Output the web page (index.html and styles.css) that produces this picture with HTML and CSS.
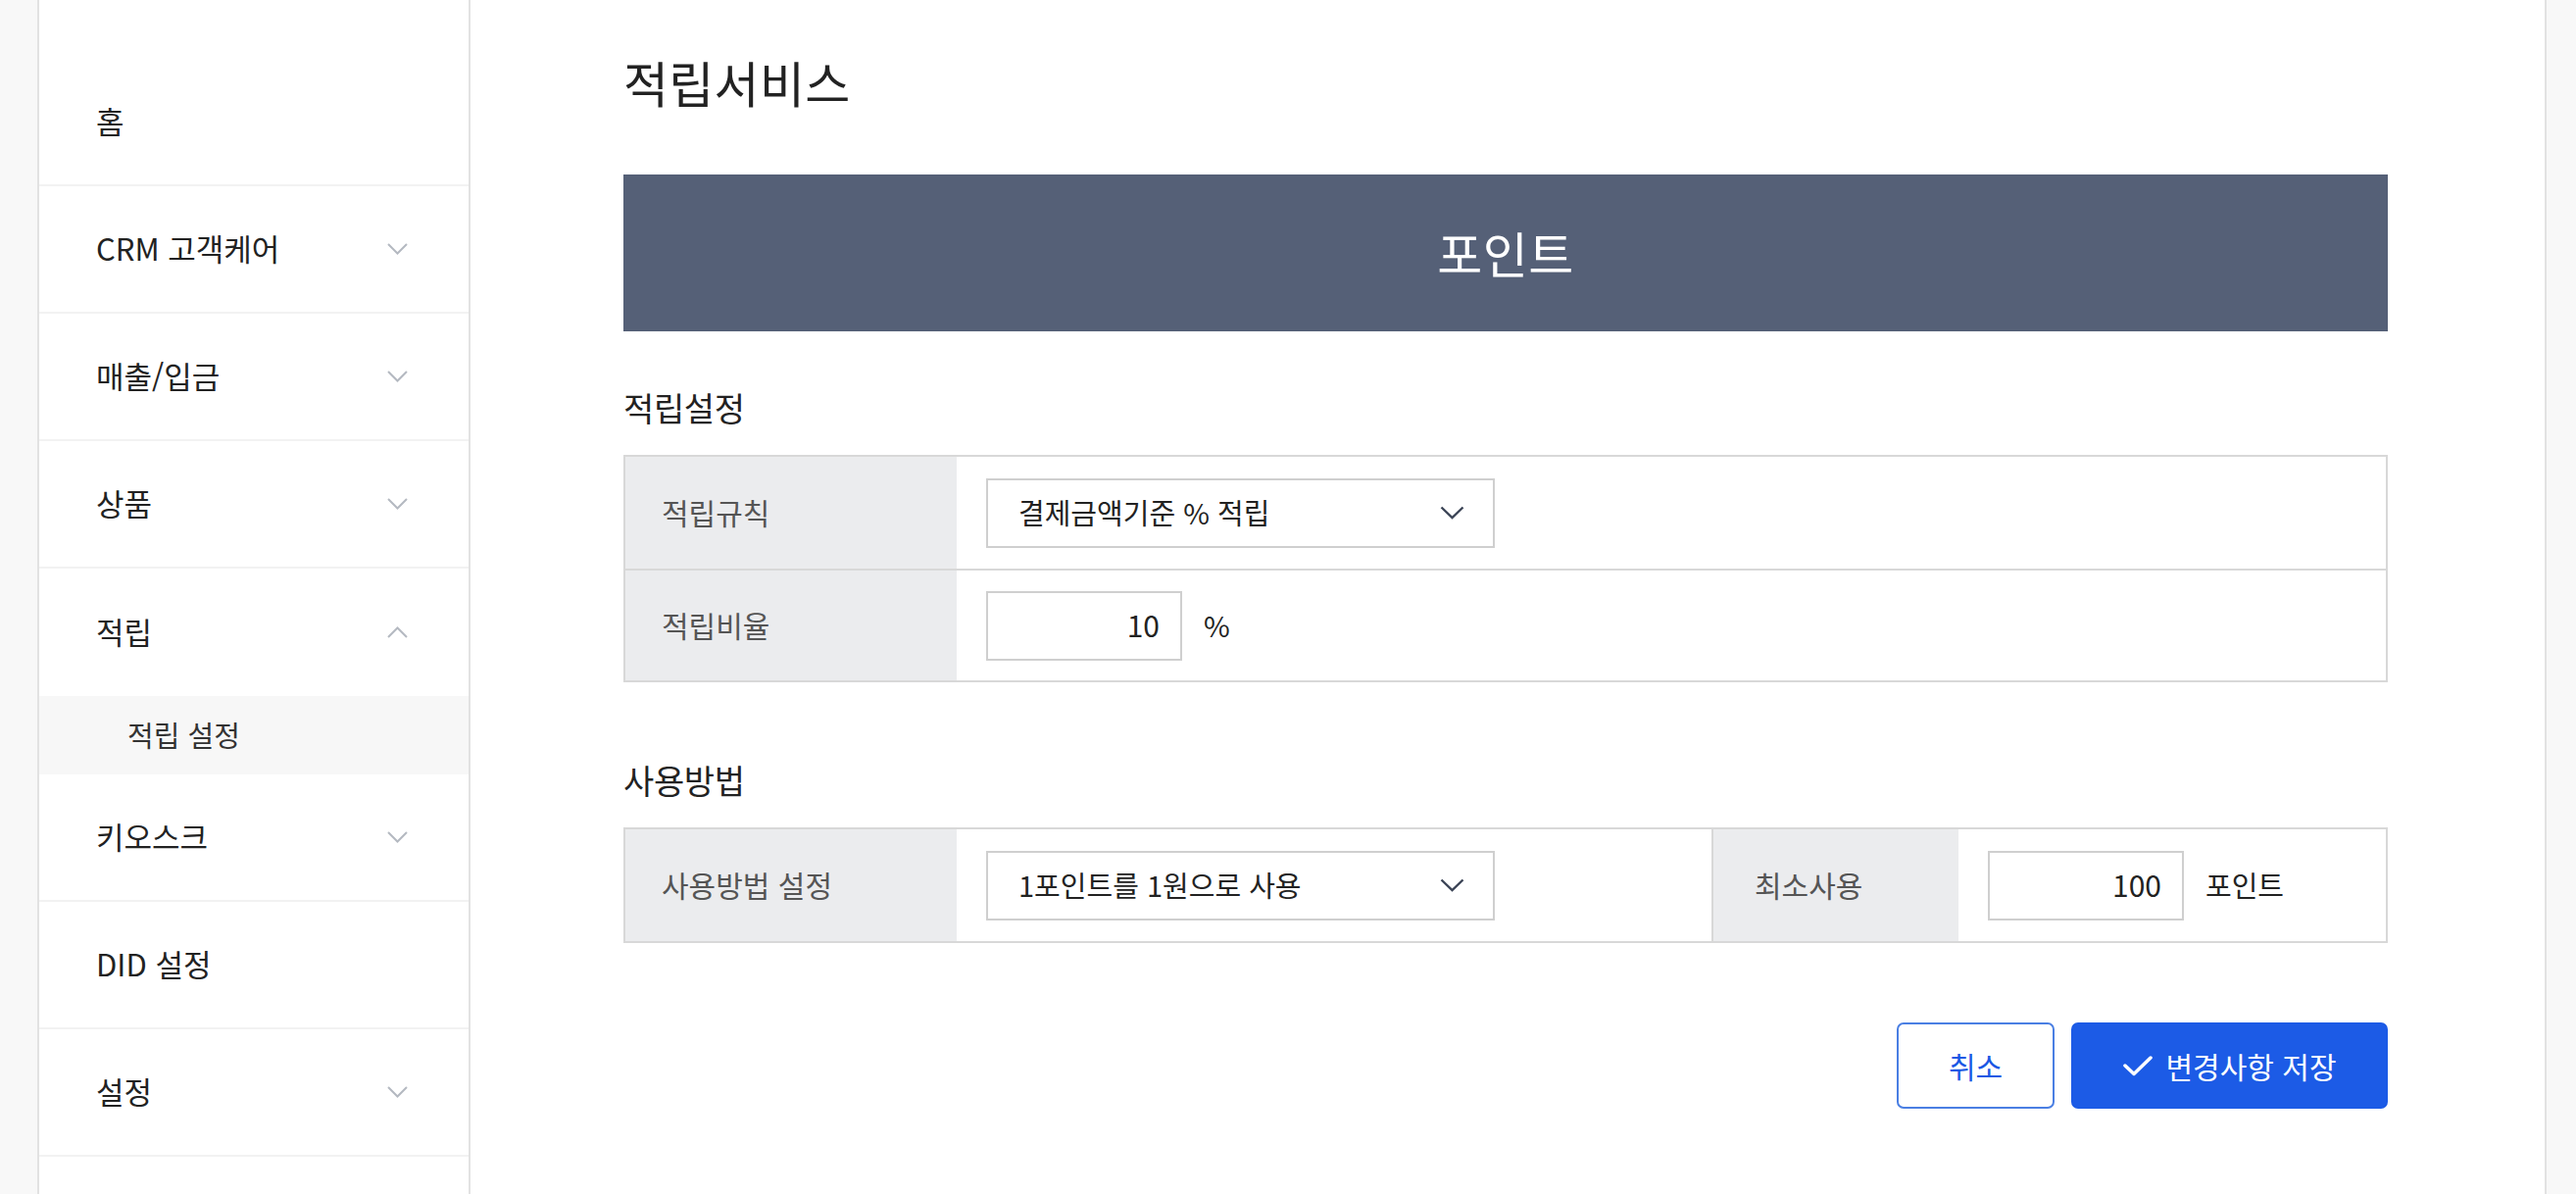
FILE: index.html
```html
<!DOCTYPE html>
<html lang="ko">
<head>
<meta charset="utf-8">
<title>적립서비스</title>
<link rel="stylesheet" href="styles.css">
</head>
<body>
<div class="app">
  <aside class="sidebar">
    <nav class="nav">
      <div class="nav-item"><span>홈</span></div>
      <div class="nav-item"><span>CRM 고객케어</span>
        <svg class="chev" width="21" height="12" viewBox="0 0 21 12"><polyline points="1,1 10.5,10.5 20,1" /></svg>
      </div>
      <div class="nav-item"><span>매출/입금</span>
        <svg class="chev" width="21" height="12" viewBox="0 0 21 12"><polyline points="1,1 10.5,10.5 20,1" /></svg>
      </div>
      <div class="nav-item"><span>상품</span>
        <svg class="chev" width="21" height="12" viewBox="0 0 21 12"><polyline points="1,1 10.5,10.5 20,1" /></svg>
      </div>
      <div class="nav-group">
        <div class="nav-item open"><span>적립</span>
          <svg class="chev" width="21" height="12" viewBox="0 0 21 12"><polyline points="1,11 10.5,1.5 20,11" /></svg>
        </div>
        <div class="nav-sub">적립 설정</div>
      </div>
      <div class="nav-item"><span>키오스크</span>
        <svg class="chev" width="21" height="12" viewBox="0 0 21 12"><polyline points="1,1 10.5,10.5 20,1" /></svg>
      </div>
      <div class="nav-item"><span>DID 설정</span></div>
      <div class="nav-item"><span>설정</span>
        <svg class="chev" width="21" height="12" viewBox="0 0 21 12"><polyline points="1,1 10.5,10.5 20,1" /></svg>
      </div>
      <div class="nav-item"><span></span></div>
    </nav>
  </aside>
  <main class="main">
    <div class="content">
      <h1 class="page-title">적립서비스</h1>
      <div class="banner">포인트</div>

      <h2 class="section-title">적립설정</h2>
      <div class="table">
        <div class="row">
          <div class="label">적립규칙</div>
          <div class="value">
            <div class="select"><span>결제금액기준 % 적립</span>
              <svg class="sel-chev" width="25" height="14" viewBox="0 0 25 14"><polyline points="1.5,1.5 12.5,12 23.5,1.5" /></svg>
            </div>
          </div>
        </div>
        <div class="row">
          <div class="label">적립비율</div>
          <div class="value">
            <div class="input">10</div>
            <span class="unit">%</span>
          </div>
        </div>
      </div>

      <h2 class="section-title second">사용방법</h2>
      <div class="table">
        <div class="row row4">
          <div class="label">사용방법 설정</div>
          <div class="value">
            <div class="select"><span>1포인트를 1원으로 사용</span>
              <svg class="sel-chev" width="25" height="14" viewBox="0 0 25 14"><polyline points="1.5,1.5 12.5,12 23.5,1.5" /></svg>
            </div>
          </div>
          <div class="label label2">최소사용</div>
          <div class="value">
            <div class="input">100</div>
            <span class="unit">포인트</span>
          </div>
        </div>
      </div>

      <div class="actions">
        <button class="btn btn-cancel" type="button">취소</button>
        <button class="btn btn-save" type="button">
          <svg class="check" width="30" height="22" viewBox="0 0 30 22"><polyline points="2,11 11,19.5 28,3" /></svg>
          <span>변경사항 저장</span>
        </button>
      </div>
    </div>
  </main>
</div>
</body>
</html>
```
FILE: styles.css
```css
* { box-sizing: border-box; }

html, body {
  margin: 0;
  padding: 0;
  height: 100%;
  background: #f8f8f8;
  font-family: "Noto Sans CJK KR", "Noto Sans", sans-serif;
  color: #222;
  overflow: hidden;
}

.app {
  margin-left: 38px;
  width: 2560px;
  height: 1218px;
  background: #fff;
  border-left: 2px solid #e2e2e2;
  border-right: 2px solid #e2e2e2;
  display: flex;
  overflow: hidden;
}

.sidebar {
  width: 440px;
  flex: none;
  border-right: 2px solid #e2e2e2;
  padding-top: 60px;
}

.nav-item {
  height: 130px;
  border-bottom: 2px solid #f2f2f2;
  display: flex;
  align-items: center;
  justify-content: space-between;
  padding: 0 62px 3px 58px;
  font-size: 31px;
  color: #222;
}

.nav-item .chev {
  margin-top: 3px;
}

.nav-item.open {
  border-bottom: none;
}

.chev polyline {
  fill: none;
  stroke: #b4b9c1;
  stroke-width: 2;
}

.nav-sub {
  height: 80px;
  background: #f7f7f7;
  display: flex;
  align-items: center;
  padding: 0 0 3px 90px;
  font-size: 29px;
  color: #333;
}

.main {
  flex: 1;
}

.content {
  width: 1800px;
  margin-left: 156px;
  padding-top: 53px;
}

.page-title {
  margin: 0;
  font-size: 50px;
  line-height: 60px;
  font-weight: 400;
  letter-spacing: 0.3px;
  color: #222;
}

.banner {
  margin-top: 65px;
  height: 160px;
  background: #556077;
  color: #fff;
  display: flex;
  align-items: center;
  justify-content: center;
  font-size: 50px;
  letter-spacing: 0.5px;
  padding-bottom: 2px;
}

.section-title {
  margin: 58px 0 0;
  font-size: 34px;
  line-height: 40px;
  font-weight: 400;
  letter-spacing: -0.4px;
  color: #222;
}

.section-title.second {
  margin-top: 80px;
}

.table {
  margin-top: 28px;
  border: 2px solid #d8d8d8;
}

.row {
  display: grid;
  grid-template-columns: 338px 1fr;
  min-height: 114px;
}

.row + .row {
  border-top: 2px solid #d8d8d8;
}

.row4 {
  grid-template-columns: 338px 770px 252px 1fr;
}

.label {
  background: #ebecee;
  display: flex;
  align-items: center;
  padding: 0 0 3px 37px;
  font-size: 30px;
  color: #555;
}

.label2 {
  border-left: 2px solid #d8d8d8;
  padding-left: 42px;
}

.value {
  display: flex;
  align-items: center;
  padding-left: 30px;
  gap: 22px;
  font-size: 29px;
  color: #222;
}

.select {
  width: 519px;
  height: 71px;
  border: 2px solid #cfcfcf;
  display: flex;
  align-items: center;
  justify-content: space-between;
  padding: 0 29px 2px 31px;
  font-size: 29px;
  color: #222;
}

.sel-chev {
  margin-top: 2px;
}

.sel-chev polyline {
  fill: none;
  stroke: #3b4456;
  stroke-width: 2.4;
}

.input {
  width: 200px;
  height: 71px;
  border: 2px solid #cfcfcf;
  display: flex;
  align-items: center;
  justify-content: flex-end;
  padding: 0 21px 2px 0;
  font-size: 30px;
  color: #222;
}

.unit {
  font-size: 29px;
  color: #222;
  margin-bottom: 2px;
}

.actions {
  margin-top: 81px;
  display: flex;
  justify-content: flex-end;
  gap: 17px;
}

.btn {
  height: 88px;
  border-radius: 7px;
  font-family: "Noto Sans CJK KR", "Noto Sans", sans-serif;
  font-size: 30px;
  display: flex;
  align-items: center;
  justify-content: center;
  cursor: pointer;
  padding-bottom: 2px;
}

.btn-cancel {
  width: 161px;
  background: #fff;
  border: 2px solid #4a7fe3;
  color: #1b58e4;
}

.btn-save {
  width: 323px;
  background: #1c5be6;
  border: none;
  color: #fff;
  gap: 14px;
}

.check polyline {
  fill: none;
  stroke: #fff;
  stroke-width: 3.5;
  stroke-linecap: round;
  stroke-linejoin: round;
}
```
